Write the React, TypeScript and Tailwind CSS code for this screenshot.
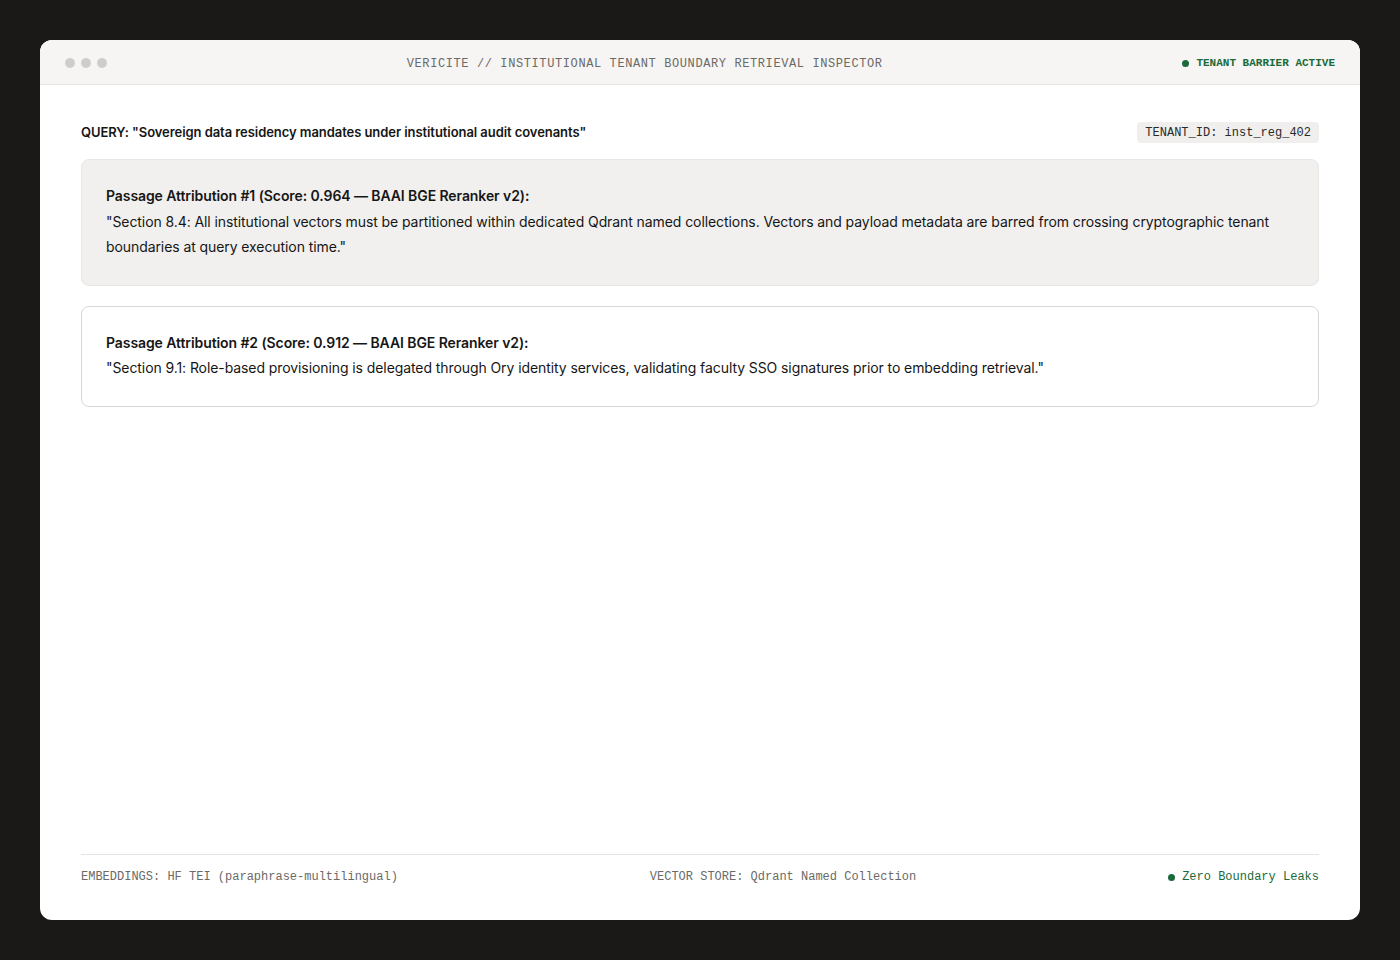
import React from 'react';

const mono = "font-['Liberation_Mono','DejaVu_Sans_Mono',monospace]";
const sans = "font-['Inter','Noto_Sans',sans-serif]";

const passages = [
  {
    id: 1,
    score: '0.964',
    text: '"Section 8.4: All institutional vectors must be partitioned within dedicated Qdrant named collections. Vectors and payload metadata are barred from crossing cryptographic tenant boundaries at query execution time."',
    highlight: true,
  },
  {
    id: 2,
    score: '0.912',
    text: '"Section 9.1: Role-based provisioning is delegated through Ory identity services, validating faculty SSO signatures prior to embedding retrieval."',
    highlight: false,
  },
];

const App: React.FC = () => {
  return (
    <div className="min-h-screen bg-[#1a1918] p-10">
      <div className="h-[880px] bg-white rounded-xl overflow-hidden flex flex-col">
        {/* title bar */}
        <div className="h-[45px] shrink-0 bg-[#f6f5f3] border-b border-[#e6e4e0] flex items-center justify-between pl-[25px] pr-[25px] pt-[3px]">
          <div className="flex items-center gap-[6px] -mt-[2px]">
            <span className="w-[10px] h-[10px] rounded-full bg-[#cfcdca]" />
            <span className="w-[10px] h-[10px] rounded-full bg-[#cfcdca]" />
            <span className="w-[10px] h-[10px] rounded-full bg-[#cfcdca]" />
          </div>
          <div className={`${mono} text-[12px] tracking-[0.05em] text-[#6b6a67]`}>
            VERICITE // INSTITUTIONAL TENANT BOUNDARY RETRIEVAL INSPECTOR
          </div>
          <div className={`${mono} flex items-center gap-[7px] text-[11px] font-bold text-[#1b6b3a]`}>
            <span className="w-[7px] h-[7px] rounded-full bg-[#1b6b3a]" />
            TENANT BARRIER ACTIVE
          </div>
        </div>

        {/* body */}
        <div className="flex-1 flex flex-col px-[41px] pt-[37px] pb-[36px]">
          <div className="flex items-center justify-between mb-4">
            <div className={`${sans} text-[13px] font-semibold tracking-[-0.005em] text-[#161616]`}>
              QUERY: "Sovereign data residency mandates under institutional audit covenants"
            </div>
            <div className={`${mono} text-[12px] text-[#2a2a2a] bg-[#f0efed] rounded-[4px] px-2 h-[21px] flex items-center`}>
              TENANT_ID: inst_reg_402
            </div>
          </div>

          <div className="flex flex-col gap-5">
            {passages.map((p) => (
              <div
                key={p.id}
                className={`${sans} rounded-lg border px-6 pt-[23px] pb-[25px] text-[14px] leading-[25.5px] tracking-[-0.006em] text-[#161616] ${
                  p.highlight ? 'bg-[#f1f0ee] border-[#e8e6e3]' : 'bg-white border-[#d9d7d3]'
                }`}
              >
                <div className="font-semibold">
                  Passage Attribution #{p.id} (Score: {p.score} — BAAI BGE Reranker v2):
                </div>
                <p>{p.text}</p>
              </div>
            ))}
          </div>

          <div className={`${mono} mt-auto border-t border-[#e6e4e0] pt-[15px] flex items-center justify-between text-[12px] leading-[14px] text-[#6b6a67]`}>
            <span>EMBEDDINGS: HF TEI (paraphrase-multilingual)</span>
            <span>VECTOR STORE: Qdrant Named Collection</span>
            <span className="flex items-center gap-[7px] text-[#1b6b3a]">
              <span className="w-[7px] h-[7px] rounded-full bg-[#1b6b3a]" />
              Zero Boundary Leaks
            </span>
          </div>
        </div>
      </div>
    </div>
  );
};

export default App;
